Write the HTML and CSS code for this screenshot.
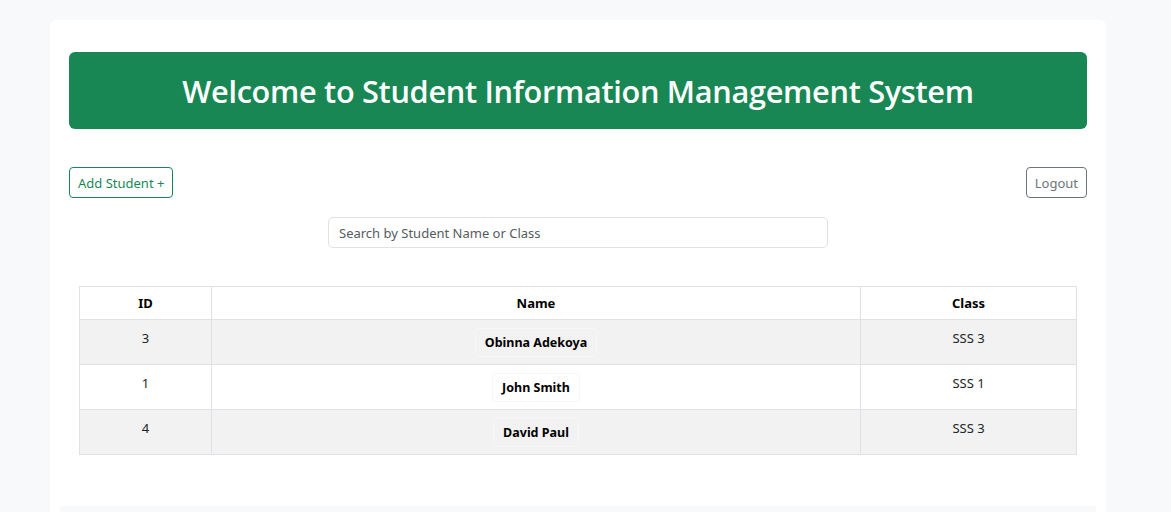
FILE: index.html
```html
<!DOCTYPE html>
<html lang="en">
<head>
<meta charset="utf-8">
<title>Student Information Management System</title>
<link rel="stylesheet" href="styles.css">
</head>
<body>
<div class="card">
  <div class="section">
    <header class="banner"><h1>Welcome to Student Information Management System</h1></header>
    <div class="actions">
      <button class="btn btn-green">Add Student +</button>
      <button class="btn btn-gray">Logout</button>
    </div>
    <div class="search-row">
      <input class="search" type="text" placeholder="Search by Student Name or Class">
    </div>
    <div class="table-wrap">
      <table class="students">
        <thead>
          <tr><th class="c-id">ID</th><th class="c-name">Name</th><th class="c-class">Class</th></tr>
        </thead>
        <tbody>
          <tr class="odd"><td>3</td><td><span class="name-btn">Obinna Adekoya</span></td><td>SSS 3</td></tr>
          <tr><td>1</td><td><span class="name-btn">John Smith</span></td><td>SSS 1</td></tr>
          <tr class="odd"><td>4</td><td><span class="name-btn">David Paul</span></td><td>SSS 3</td></tr>
        </tbody>
      </table>
    </div>
  </div>
  <div class="footer-panel"></div>
</div>
</body>
</html>
```
FILE: styles.css
```css
* { box-sizing: border-box; }
html, body { margin: 0; padding: 0; }
body {
  background: #f8f9fa;
  font-family: "Noto Sans", "Open Sans", sans-serif;
  font-size: 14px;
  color: #212529;
  height: 512px;
  overflow: hidden;
}
.card {
  margin: 20px 0 0 50px;
  width: 1056px;
  background: #fff;
  border-radius: 6px 6px 0 0;
  padding: 32px 10px 0;
  min-height: 600px;
}
.section { padding: 0 9px; }
.banner {
  background: #198754;
  border-radius: 6px;
  height: 77px;
  display: flex;
  align-items: center;
  justify-content: center;
}
.banner h1 {
  margin: 0;
  color: #fff;
  font-family: "Open Sans", sans-serif;
  font-weight: 600;
  font-size: 30.7px;
  letter-spacing: -0.3px;
}
.actions {
  margin-top: 38px;
  display: flex;
  justify-content: space-between;
}
.btn {
  height: 31px;
  padding: 0 8px;
  background: #fff;
  border-radius: 4px;
  font-family: inherit;
  font-size: 13px;
  cursor: pointer;
}
.btn-green { border: 1px solid #198754; color: #198754; }
.btn-gray { border: 1px solid #6c757d; color: #6c757d; }
.search-row {
  margin-top: 19px;
  display: flex;
  justify-content: center;
}
.search {
  width: 500px;
  height: 31px;
  border: 1px solid #dee2e6;
  border-radius: 5px;
  padding: 0 10px;
  font-family: inherit;
  font-size: 13px;
  color: #212529;
}
.search::placeholder { color: #555b61; }
.table-wrap { margin: 38px 10px 0; }
.students {
  width: 100%;
  border-collapse: collapse;
  text-align: center;
  font-size: 13px;
}
.students th, .students td {
  border: 1px solid #dee2e6;
  vertical-align: top;
}
.students th {
  height: 33px;
  font-weight: 700;
  color: #000;
  vertical-align: middle;
  padding: 0 8px;
}
.students td {
  height: 45px;
  padding: 8px 8px 0;
  line-height: 20px;
}
.students tr.odd td { background: #f2f2f2; }
.c-id { width: 132px; }
.c-class { width: 216px; }
.name-btn {
  display: inline-block;
  padding: 4px 9px;
  border: 1px solid #f6f7f8;
  border-radius: 4px;
  font-weight: 700;
  font-size: 12.5px;
  color: #000;
  line-height: 19px;
}
.footer-panel {
  margin-top: 51px;
  height: 40px;
  background: #f8f9fa;
}
```
